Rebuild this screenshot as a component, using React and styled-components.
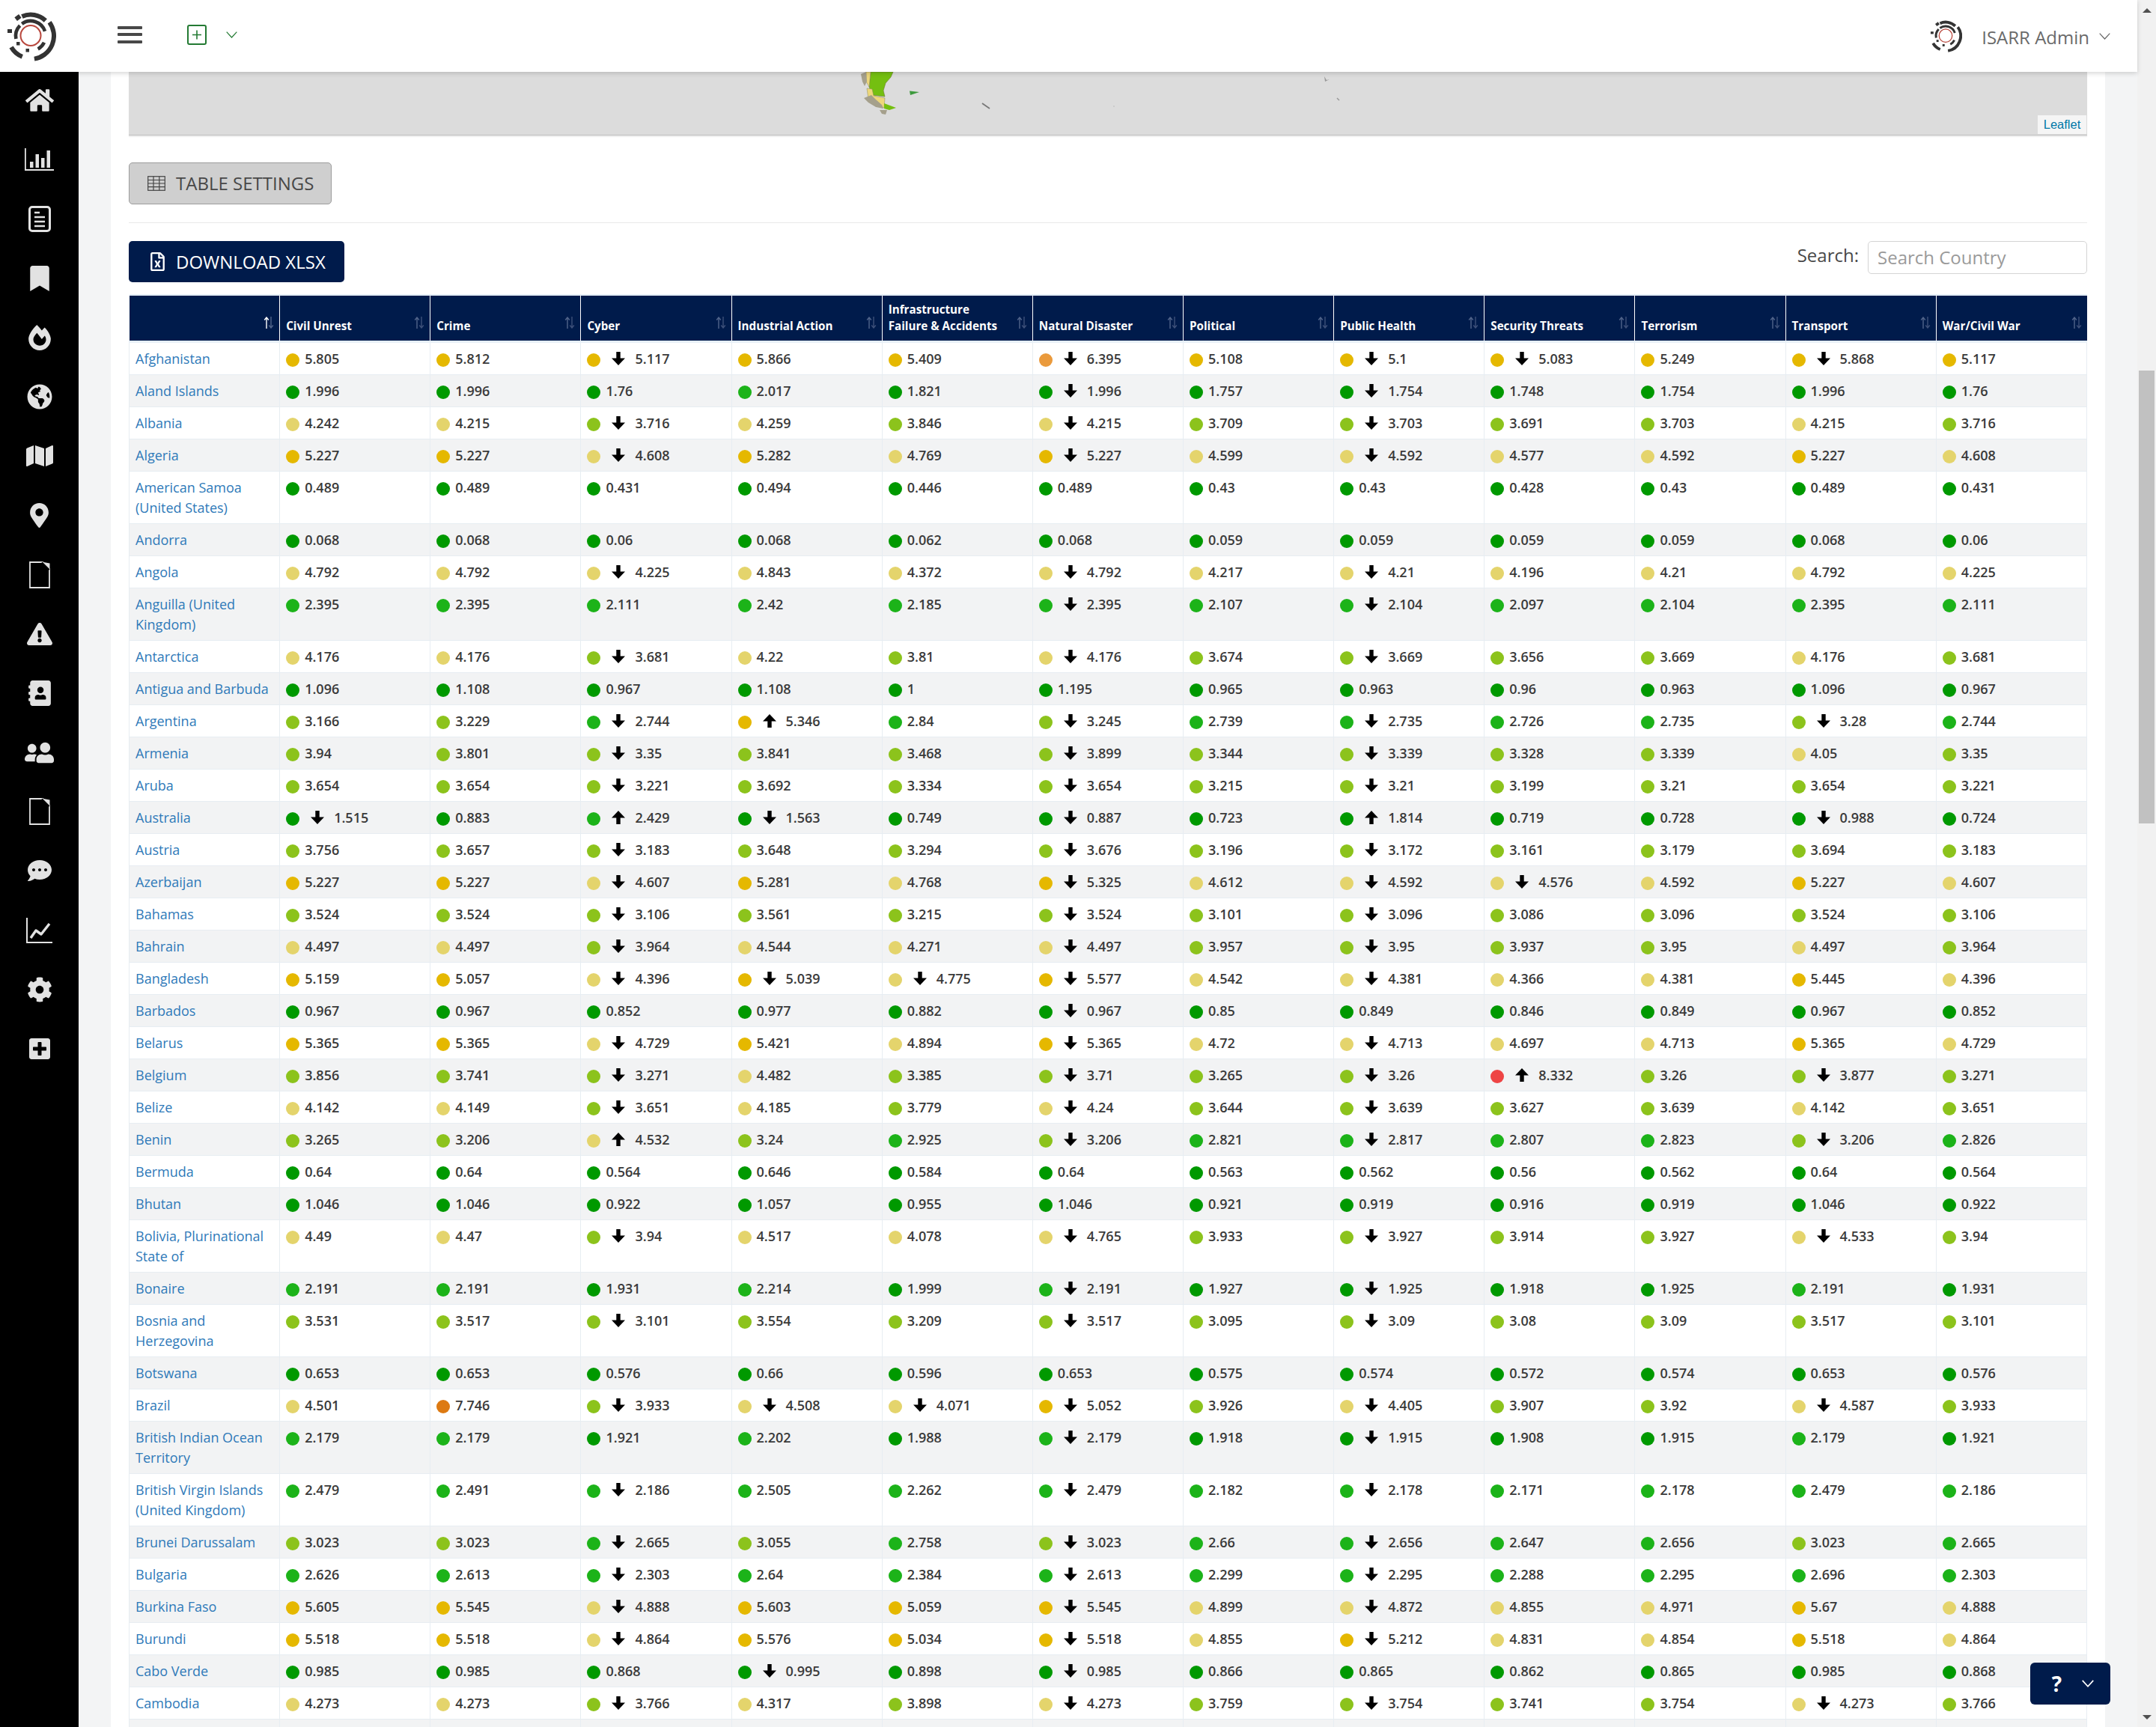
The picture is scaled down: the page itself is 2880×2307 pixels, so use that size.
import React from 'react';
import styled, { createGlobalStyle } from 'styled-components';
import {
  FaHome, FaBookmark, FaFireAlt, FaGlobeAmericas, FaMap, FaMapMarkerAlt, FaExclamationTriangle,
  FaAddressBook, FaUserFriends, FaCommentDots, FaCog, FaPlusSquare, FaRegFileExcel,
} from 'react-icons/fa';

const NAVY = '#001b4b';

const Global = createGlobalStyle`
  html, body { margin: 0; padding: 0; height: 100%; overflow: hidden; background: #f3f4f5; }
  body { font-family: "Open Sans", "Liberation Sans", sans-serif; color: #3a3a3a; }
  * { box-sizing: border-box; }
`;

const Shell = styled.div`
  position: relative;
  display: flex;
  width: 2880px;
  height: 2307px;
  overflow: hidden;
`;
const Page = styled.div`
  width: 2855px;
  display: flex;
  flex-direction: column;
  min-height: 0;
`;
const TopBar = styled.header`
  position: relative;
  z-index: 2;
  flex: none;
  height: 96px;
  display: flex;
  align-items: center;
  background: #fff;
  box-shadow: 0 2px 6px rgba(0, 0, 0, 0.16);
  padding: 0 36px 0 7px;
`;
const Hamburger = styled.div`
  width: 33px;
  height: 23px;
  margin: -4px 0 0 82px;
  display: flex;
  flex-direction: column;
  justify-content: space-between;
  & > i { display: block; height: 4px; background: #484848; border-radius: 1px; }
`;
const AddBox = styled.div`
  margin: -4px 0 0 60px;
  display: flex;
  align-items: center;
  gap: 26px;
`;
const Spacer = styled.div`flex: 1;`;
const UserName = styled.span`
  margin: 2px 0 0 26px;
  font-size: 24px;
  color: #6a6a6a;
`;
const UserChevron = styled.div`
  margin-left: 13px;
  display: flex;
`;
const Body = styled.div`
  flex: 1;
  display: flex;
  min-height: 0;
`;
const SideBar = styled.nav`
  flex: none;
  width: 105px;
  background: #000;
  display: flex;
  flex-direction: column;
`;
const SideItem = styled.div`
  height: 76px;
  margin-bottom: 3.2px;
  display: flex;
  align-items: center;
  justify-content: center;
  color: #e2e2e2;
  flex: none;
`;
const Mirrored = styled.span`
  display: flex;
  transform: scaleX(-1);
`;
const Main = styled.main`
  flex: 1;
  min-width: 0;
  padding: 0 43px;
  background: #f3f4f5;
  overflow: hidden;
`;
const Panel = styled.section`
  background: #fff;
  padding: 0 24px;
  height: 100%;
`;
const MapBox = styled.div`
  position: relative;
  height: 85px;
  background: #dcdcdc;
  border-bottom: 1px solid #bdbdbd;
  box-shadow: 0 2px 1px #efefef;
`;
const MapShapes = styled.svg`
  position: absolute;
  inset: 0;
`;
const Attribution = styled.a`
  position: absolute;
  right: 1px;
  bottom: 1px;
  height: 25px;
  width: 65px;
  display: flex;
  align-items: center;
  justify-content: center;
  background: rgba(255, 255, 255, 0.7);
  font-family: "Liberation Sans", Arial, sans-serif;
  font-size: 16.5px;
  color: #0078a8;
`;
const BaseButton = styled.button`
  height: 55.5px;
  display: flex;
  align-items: center;
  border-radius: 5px;
  font-family: inherit;
  font-size: 24px;
  padding: 0;
`;
const SettingsButton = styled(BaseButton)`
  width: 271px;
  margin-top: 36px;
  background: #cfcfcf;
  border: 1px solid #9c9c9c;
  color: #484848;
  padding-left: 24px;
  gap: 14px;
`;
const Rule = styled.hr`
  border: 0;
  border-top: 1px solid #e9e9e9;
  margin: 24px 0 0;
`;
const ToolRow = styled.div`
  display: flex;
  justify-content: space-between;
  align-items: flex-start;
  padding-top: 24px;
  height: 95px;
`;
const DownloadButton = styled(BaseButton)`
  width: 288px;
  background: ${NAVY};
  border: 0;
  color: #fff;
  padding-left: 26px;
  gap: 12px;
`;
const SearchBox = styled.label`
  display: flex;
  align-items: flex-start;
  gap: 12px;
  font-size: 24px;
  color: #484848;
  line-height: 38px;
`;
const SearchInput = styled.input`
  width: 293px;
  height: 44px;
  border: 1px solid #d4d4d4;
  border-radius: 5px;
  padding: 0 12px;
  font-family: inherit;
  font-size: 24px;
  color: #444;
  &::placeholder { color: #9a9a9a; opacity: 1; }
`;
const Table = styled.table`
  width: 2616px;
  table-layout: fixed;
  border-collapse: collapse;
  font-size: 18px;
`;
const HeadRow = styled.tr`
  background: ${NAVY};
  border-top: 2px solid #e4edf5;
  border-bottom: 3px solid #e8f0f7;
`;
const Th = styled.th`
  padding: 7px 8px 8px;
  vertical-align: bottom;
  text-align: left;
  color: #fff;
  font-size: 15.2px;
  line-height: 22.5px;
  font-weight: 700;
  border-left: 1.5px solid #fff;
  &:first-child { border-left: 0; }
`;
const HeadInner = styled.div`
  display: flex;
  justify-content: space-between;
  align-items: flex-end;
`;
const SortIcon = styled.svg`
  flex: none;
  margin: 0 -1px 8px 0;
`;
const Row = styled.tr`
  background: ${p => (p.$striped ? '#f2f3f4' : '#fff')};
`;
const Td = styled.td`
  padding: 8px 8px 7px;
  vertical-align: top;
  line-height: 27px;
  font-weight: 600;
  white-space: nowrap;
  border: 1px solid #e7edf2;
  color: #3a3a3a;
`;
const NameTd = styled(Td)`
  white-space: normal;
  font-weight: 400;
`;
const CountryLink = styled.a`
  color: #2f7ab9;
`;
const Dot = styled.span`
  display: inline-block;
  width: 18px;
  height: 18px;
  border-radius: 50%;
  background: ${p => p.$color};
  vertical-align: -4px;
  margin-right: 7px;
`;
const TrendArrow = styled.svg`
  display: inline-block;
  vertical-align: -2px;
  margin: 0 13px 0 8px;
`;
const ScrollBar = styled.div`
  width: 25px;
  flex: none;
  background: #f1f1f1;
  display: flex;
  flex-direction: column;
  align-items: center;
`;
const ScrollArrow = styled.div`
  flex: none;
  width: 0;
  height: 0;
  border-left: 6px solid transparent;
  border-right: 6px solid transparent;
  ${p => (p.$down
    ? 'border-top: 6px solid #505050; margin-bottom: 10px;'
    : 'border-bottom: 6px solid #505050; margin-top: 11px;')}
`;
const ScrollTrack = styled.div`
  flex: 1;
  width: 100%;
  padding: 478px 2px 0;
`;
const ScrollThumb = styled.div`
  height: 605px;
  background: #c1c1c1;
`;
const HelpButton = styled.div`
  position: absolute;
  left: 2712px;
  top: 2221px;
  width: 107px;
  height: 56px;
  background: ${NAVY};
  border-radius: 6px;
  color: #fff;
  display: flex;
  align-items: center;
  justify-content: center;
  gap: 27px;
  padding-left: 7px;
  font: 700 28px "Open Sans", sans-serif;
`;

const polar = (cx, cy, r, deg) => {
  const a = (deg * Math.PI) / 180;
  return [cx + r * Math.sin(a), cy - r * Math.cos(a)];
};
const arc = (r, from, to) => {
  const [x0, y0] = polar(40, 40, r, from);
  const [x1, y1] = polar(40, 40, r, to);
  return `M${x0.toFixed(2)} ${y0.toFixed(2)}A${r} ${r} 0 ${to - from > 180 ? 1 : 0} 1 ${x1.toFixed(2)} ${y1.toFixed(2)}`;
};

const Logo = ({ size }) => (
  <svg width={size} height={size} viewBox="6 6 68 68" fill="none">
    <g stroke="#333" strokeWidth="6">
      <path d={arc(28.5, -24, 44)} />
      <path d={arc(31, 54, 171)} />
      <path d={arc(30, -158, -120)} />
      <path d={arc(20, -36, 72)} strokeWidth="4.6" />
      <path d={arc(20, -101, -46)} strokeWidth="4.6" />
      <path d={arc(20, 116, 151)} strokeWidth="4.6" />
    </g>
    <g fill="#333">
      <rect x="19.5" y="12.5" width="7" height="6" transform="rotate(-36 23 15.5)" />
      <rect x="9" y="31" width="6" height="5" />
      <rect x="21" y="48" width="4.5" height="4.5" />
      <rect x="33.5" y="57" width="4.5" height="4.5" />
    </g>
    <circle cx="40" cy="39.5" r="13.5" stroke="#b8473d" strokeWidth="2" />
  </svg>
);

const Chevron = ({ w = 15, h = 9, color = '#666', sw = 1.2 }) => (
  <svg width={w} height={h} viewBox="0 0 15 9" fill="none">
    <path d="M0.7 0.7L7.5 8L14.3 0.7" stroke={color} strokeWidth={sw} />
  </svg>
);

const BarIcon = () => (
  <svg width="39" height="30" viewBox="0 0 39 30" fill="currentColor">
    <rect x="0" y="0" width="1.8" height="30" />
    <rect x="0" y="28" width="39" height="2" />
    <rect x="7" y="18" width="4.5" height="8" />
    <rect x="14.5" y="8" width="4.5" height="18" />
    <rect x="22" y="13" width="4.5" height="13" />
    <rect x="29.5" y="3" width="4.5" height="23" />
  </svg>
);
const DocIcon = () => (
  <svg width="30" height="35" viewBox="0 0 30 35" fill="none" stroke="currentColor">
    <rect x="1.5" y="1.5" width="27" height="32" rx="3.5" strokeWidth="3" />
    <path d="M8 9h7M8 15h14M8 21h14M8 27h14" strokeWidth="2.6" />
  </svg>
);
const LoFile = () => (
  <svg width="28" height="36" viewBox="0 0 28 36" fill="none" stroke="currentColor">
    <path d="M1 1H18L27 10V35H1Z" strokeWidth="1.8" />
    <path d="M16.5 0.5L27.5 11V2.5Z" fill="currentColor" stroke="none" />
    <path d="M17 1L27 11" stroke="#000" strokeWidth="1.5" />
  </svg>
);
const LineChart = () => (
  <svg width="35" height="34" viewBox="0 0 35 34" fill="none" stroke="currentColor">
    <path d="M1 0V33H35" strokeWidth="2" />
    <path d="M6 27L13 17L20 22L31 8" strokeWidth="3.4" strokeLinejoin="round" />
  </svg>
);
const sideIcons = [
  <FaHome size={38} />, <BarIcon />, <DocIcon />, <FaBookmark size={34} />, <FaFireAlt size={34} />,
  <FaGlobeAmericas size={34} />, <FaMap size={36} />, <FaMapMarkerAlt size={33} />, <LoFile />,
  <FaExclamationTriangle size={34} />, <Mirrored><FaAddressBook size={34} /></Mirrored>,
  <Mirrored><FaUserFriends size={39} /></Mirrored>, <LoFile />,
  <FaCommentDots size={32} />, <LineChart />, <FaCog size={34} />, <FaPlusSquare size={32} />,
];

const heads = ['', 'Civil Unrest', 'Crime', 'Cyber', 'Industrial Action', ['Infrastructure', 'Failure & Accidents'],
  'Natural Disaster', 'Political', 'Public Health', 'Security Threats', 'Terrorism', 'Transport', 'War/Civil War'];

const data = `Afghanistan|5.805 5.812 v5.117 5.866 5.409 v6.395 5.108 v5.1 v5.083 5.249 v5.868 5.117
Aland Islands|1.996 1.996 1.76 2.017 1.821 v1.996 1.757 v1.754 1.748 1.754 1.996 1.76
Albania|4.242 4.215 v3.716 4.259 3.846 v4.215 3.709 v3.703 3.691 3.703 4.215 3.716
Algeria|5.227 5.227 v4.608 5.282 4.769 v5.227 4.599 v4.592 4.577 4.592 5.227 4.608
American Samoa (United States)|0.489 0.489 0.431 0.494 0.446 0.489 0.43 0.43 0.428 0.43 0.489 0.431
Andorra|0.068 0.068 0.06 0.068 0.062 0.068 0.059 0.059 0.059 0.059 0.068 0.06
Angola|4.792 4.792 v4.225 4.843 4.372 v4.792 4.217 v4.21 4.196 4.21 4.792 4.225
Anguilla (United Kingdom)|2.395 2.395 2.111 2.42 2.185 v2.395 2.107 v2.104 2.097 2.104 2.395 2.111
Antarctica|4.176 4.176 v3.681 4.22 3.81 v4.176 3.674 v3.669 3.656 3.669 4.176 3.681
Antigua and Barbuda|1.096 1.108 0.967 1.108 1 1.195 0.965 0.963 0.96 0.963 1.096 0.967
Argentina|3.166 3.229 v2.744 ^5.346 2.84 v3.245 2.739 v2.735 2.726 2.735 v3.28 2.744
Armenia|3.94 3.801 v3.35 3.841 3.468 v3.899 3.344 v3.339 3.328 3.339 4.05 3.35
Aruba|3.654 3.654 v3.221 3.692 3.334 v3.654 3.215 v3.21 3.199 3.21 3.654 3.221
Australia|v1.515 0.883 ^2.429 v1.563 0.749 v0.887 0.723 ^1.814 0.719 0.728 v0.988 0.724
Austria|3.756 3.657 v3.183 3.648 3.294 v3.676 3.196 v3.172 3.161 3.179 3.694 3.183
Azerbaijan|5.227 5.227 v4.607 5.281 4.768 v5.325 4.612 v4.592 v4.576 4.592 5.227 4.607
Bahamas|3.524 3.524 v3.106 3.561 3.215 v3.524 3.101 v3.096 3.086 3.096 3.524 3.106
Bahrain|4.497 4.497 v3.964 4.544 4.271 v4.497 3.957 v3.95 3.937 3.95 4.497 3.964
Bangladesh|5.159 5.057 v4.396 v5.039 v4.775 v5.577 4.542 v4.381 4.366 4.381 5.445 4.396
Barbados|0.967 0.967 0.852 0.977 0.882 v0.967 0.85 0.849 0.846 0.849 0.967 0.852
Belarus|5.365 5.365 v4.729 5.421 4.894 v5.365 4.72 v4.713 4.697 4.713 5.365 4.729
Belgium|3.856 3.741 v3.271 4.482 3.385 v3.71 3.265 v3.26 ^8.332 3.26 v3.877 3.271
Belize|4.142 4.149 v3.651 4.185 3.779 v4.24 3.644 v3.639 3.627 3.639 4.142 3.651
Benin|3.265 3.206 ^4.532 3.24 2.925 v3.206 2.821 v2.817 2.807 2.823 v3.206 2.826
Bermuda|0.64 0.64 0.564 0.646 0.584 0.64 0.563 0.562 0.56 0.562 0.64 0.564
Bhutan|1.046 1.046 0.922 1.057 0.955 1.046 0.921 0.919 0.916 0.919 1.046 0.922
Bolivia, Plurinational State of|4.49 4.47 v3.94 4.517 4.078 v4.765 3.933 v3.927 3.914 3.927 v4.533 3.94
Bonaire|2.191 2.191 1.931 2.214 1.999 v2.191 1.927 v1.925 1.918 1.925 2.191 1.931
Bosnia and Herzegovina|3.531 3.517 v3.101 3.554 3.209 v3.517 3.095 v3.09 3.08 3.09 3.517 3.101
Botswana|0.653 0.653 0.576 0.66 0.596 0.653 0.575 0.574 0.572 0.574 0.653 0.576
Brazil|4.501 7.746 v3.933 v4.508 v4.071 v5.052 3.926 v4.405 3.907 3.92 v4.587 3.933
British Indian Ocean Territory|2.179 2.179 1.921 2.202 1.988 v2.179 1.918 v1.915 1.908 1.915 2.179 1.921
British Virgin Islands (United Kingdom)|2.479 2.491 v2.186 2.505 2.262 v2.479 2.182 v2.178 2.171 2.178 2.479 2.186
Brunei Darussalam|3.023 3.023 v2.665 3.055 2.758 v3.023 2.66 v2.656 2.647 2.656 3.023 2.665
Bulgaria|2.626 2.613 v2.303 2.64 2.384 v2.613 2.299 v2.295 2.288 2.295 2.696 2.303
Burkina Faso|5.605 5.545 v4.888 5.603 5.059 v5.545 4.899 v4.872 4.855 4.971 5.67 4.888
Burundi|5.518 5.518 v4.864 5.576 5.034 v5.518 4.855 v5.212 4.831 4.854 5.518 4.864
Cabo Verde|0.985 0.985 0.868 v0.995 0.898 v0.985 0.866 0.865 0.862 0.865 0.985 0.868
Cambodia|4.273 4.273 v3.766 4.317 3.898 v4.273 3.759 v3.754 3.741 3.754 v4.273 3.766`
  .split('\n')
  .map(line => {
    const [name, vals] = line.split('|');
    return { name, vals: vals.split(' ') };
  });

const levelColor = v => {
  if (v < 2) return '#009900';
  if (v < 3) return '#1cb319';
  if (v < 4) return '#8cc31c';
  if (v < 5) return '#e4d46c';
  if (v < 6) return '#e5b800';
  if (v < 7) return '#ea9a3c';
  if (v < 8) return '#dd7a12';
  return '#ee4444';
};

const Trend = ({ up }) => (
  <TrendArrow width="18" height="18" viewBox="0 0 18 18" style={up ? { transform: 'rotate(180deg)' } : undefined}>
    <path d="M6.3 0H11.7V8.5H18L9 18L0 8.5H6.3Z" fill="#000" />
  </TrendArrow>
);

const Score = ({ raw }) => {
  const mark = raw[0];
  const text = mark === 'v' || mark === '^' ? raw.slice(1) : raw;
  return (
    <Td>
      <Dot $color={levelColor(parseFloat(text))} />
      {mark === 'v' && <Trend />}
      {mark === '^' && <Trend up />}
      {text}
    </Td>
  );
};

const Sort = ({ active }) => (
  <SortIcon width="14" height="16" viewBox="0 0 14 16" fill="none">
    <path d="M4 16V1.5M1.2 4.5L4 1L6.8 4.5" stroke={active ? '#fff' : '#51648a'} strokeWidth="1.4" />
    <path d="M10 0V14.5M7.2 11.5L10 15L12.8 11.5" stroke={active ? '#51648a' : '#3d5079'} strokeWidth="1.4" />
  </SortIcon>
);

export default function App() {
  return (
    <Shell>
      <Global />
      <Page>
        <TopBar>
          <Logo size={68} />
          <Hamburger><i /><i /><i /></Hamburger>
          <AddBox>
            <svg width="26" height="27" viewBox="0 0 26 27" fill="none" stroke="#237a33">
              <rect x="1" y="1" width="24" height="25" rx="2" strokeWidth="2" />
              <path d="M13 7.5v12M7 13.5h12" strokeWidth="1.6" />
            </svg>
            <Chevron color="#237a33" />
          </AddBox>
          <Spacer />
          <Logo size={44} />
          <UserName>ISARR Admin</UserName>
          <UserChevron><Chevron /></UserChevron>
        </TopBar>
        <Body>
          <SideBar>
            {sideIcons.map((icon, i) => <SideItem key={i}>{icon}</SideItem>)}
          </SideBar>
          <Main>
            <Panel>
              <MapBox>
                <MapShapes width="2616" height="85" viewBox="0 0 2616 85">
                  <g transform="translate(978,1)">
                    <path d="M13 -1H43L40 6L33 14L30 24L32 32L15 30L11 19Z" fill="#74bf10" stroke="#6f7a33" strokeWidth="0.6" />
                    <path d="M7 -1H13L11 19L7 12Z" fill="#edd77a" stroke="#8d8a5a" strokeWidth="0.5" />
                    <path d="M8 21L15 22L17 31L32 34L31 47L22 44L10 36Z" fill="#edd77a" stroke="#8d8a5a" strokeWidth="0.5" />
                    <path d="M31 41L47 47L38 50L31 48Z" fill="#74bf10" />
                    <path d="M0 2L7 -1L8 12L5 18L2 12Z" fill="#a5a08c" />
                    <path d="M4 34L14 30L20 36L28 43L30 48L20 46L10 40Z" fill="#a5a08c" />
                    <path d="M25 50L35 50L33 56L28 55Z" fill="#a5a08c" />
                    <path d="M65 24.5L78 26L66 30Z" fill="#3d9a3d" />
                  </g>
                  <path d="M1140 42L1150 49" stroke="#777" strokeWidth="1.8" />
                  <path d="M1316 45v2" stroke="#bbb" strokeWidth="1" />
                  <path d="M1597 6L1598 13L1604 10L1600 11Z" fill="#999" />
                  <path d="M1614 35L1617 38" stroke="#999" strokeWidth="1.5" />
                </MapShapes>
                <Attribution>Leaflet</Attribution>
              </MapBox>
              <SettingsButton>
                <svg width="24" height="20" viewBox="0 0 24 20" fill="none" stroke="#444" strokeWidth="1.2">
                  <rect x="0.7" y="0.7" width="22.6" height="18.6" />
                  <path d="M0.7 5.5H23.3M0.7 10H23.3M0.7 14.7H23.3M8 0.7V19.3M15.8 0.7V19.3" />
                </svg>
                TABLE SETTINGS
              </SettingsButton>
              <Rule />
              <ToolRow>
                <DownloadButton><FaRegFileExcel size={25} />DOWNLOAD XLSX</DownloadButton>
                <SearchBox>
                  Search:
                  <SearchInput placeholder="Search Country" />
                </SearchBox>
              </ToolRow>
              <Table>
                <thead>
                  <HeadRow>
                    {heads.map((h, i) => (
                      <Th key={i}>
                        <HeadInner>
                          <span>{Array.isArray(h) ? <>{h[0]}<br />{h[1]}</> : h}</span>
                          <Sort active={i === 0} />
                        </HeadInner>
                      </Th>
                    ))}
                  </HeadRow>
                </thead>
                <tbody>
                  {data.map((row, i) => (
                    <Row key={row.name} $striped={i % 2 === 1}>
                      <NameTd><CountryLink>{row.name}</CountryLink></NameTd>
                      {row.vals.map((v, j) => <Score key={j} raw={v} />)}
                    </Row>
                  ))}
                  <Row $striped>
                    {heads.map((h, i) => <Td key={i}>&nbsp;</Td>)}
                  </Row>
                </tbody>
              </Table>
            </Panel>
          </Main>
        </Body>
      </Page>
      <ScrollBar>
        <ScrollArrow />
        <ScrollTrack><ScrollThumb /></ScrollTrack>
        <ScrollArrow $down />
      </ScrollBar>
      <HelpButton>?<Chevron w={16} h={10} color="#fff" sw={1.6} /></HelpButton>
    </Shell>
  );
}
